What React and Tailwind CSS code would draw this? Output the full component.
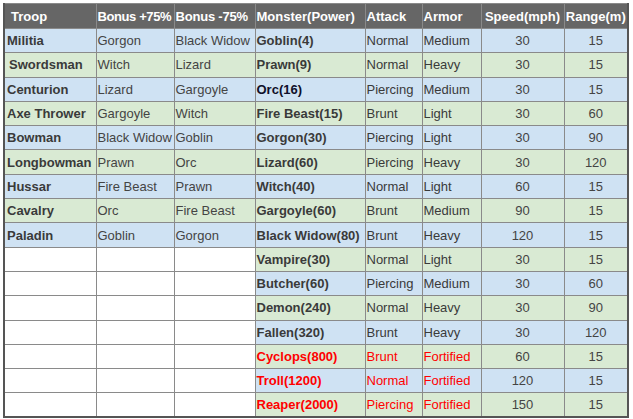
import React from 'react';

const troops = [
  ['Militia', 'Gorgon', 'Black Widow'],
  ['Swordsman', 'Witch', 'Lizard'],
  ['Centurion', 'Lizard', 'Gargoyle'],
  ['Axe Thrower', 'Gargoyle', 'Witch'],
  ['Bowman', 'Black Widow', 'Goblin'],
  ['Longbowman', 'Prawn', 'Orc'],
  ['Hussar', 'Fire Beast', 'Prawn'],
  ['Cavalry', 'Orc', 'Fire Beast'],
  ['Paladin', 'Goblin', 'Gorgon'],
];

const monsters = [
  ['Goblin(4)', 'Normal', 'Medium', '30', '15'],
  ['Prawn(9)', 'Normal', 'Heavy', '30', '15'],
  ['Orc(16)', 'Piercing', 'Medium', '30', '15'],
  ['Fire Beast(15)', 'Brunt', 'Light', '30', '60'],
  ['Gorgon(30)', 'Piercing', 'Light', '30', '90'],
  ['Lizard(60)', 'Piercing', 'Heavy', '30', '120'],
  ['Witch(40)', 'Normal', 'Light', '60', '15'],
  ['Gargoyle(60)', 'Brunt', 'Medium', '90', '15'],
  ['Black Widow(80)', 'Brunt', 'Heavy', '120', '15'],
  ['Vampire(30)', 'Normal', 'Light', '30', '15'],
  ['Butcher(60)', 'Piercing', 'Medium', '30', '60'],
  ['Demon(240)', 'Normal', 'Heavy', '30', '90'],
  ['Fallen(320)', 'Brunt', 'Heavy', '30', '120'],
  ['Cyclops(800)', 'Brunt', 'Fortified', '60', '15'],
  ['Troll(1200)', 'Normal', 'Fortified', '120', '15'],
  ['Reaper(2000)', 'Piercing', 'Fortified', '150', '15'],
];

const cell = 'border border-[#8a8a8a] px-[1px] py-0 whitespace-nowrap align-middle';

export default function App() {
  return (
    <div className="w-[633px] h-[419px] bg-white pt-[3px] pl-[3px] overflow-hidden" style={{ fontFamily: '"Liberation Sans", Arial, sans-serif' }}>
      <table className="border-collapse table-fixed w-[624px] text-[13px] leading-[15px] border-2 border-t-0 border-[#555]">
        <colgroup>
          <col className="w-[92px]" />
          <col className="w-[78px]" />
          <col className="w-[81px]" />
          <col className="w-[110px]" />
          <col className="w-[57px]" />
          <col className="w-[59px]" />
          <col className="w-[83px]" />
          <col className="w-[64px]" />
        </colgroup>
        <thead>
          <tr className="h-[25px] bg-[#666666] text-white font-bold">
            <th className={`${cell} text-left pl-[6px]`}>Troop</th>
            <th className={`${cell} text-left tracking-[-0.4px]`}>Bonus +75%</th>
            <th className={`${cell} text-left tracking-[-0.2px]`}>Bonus -75%</th>
            <th className={`${cell} text-left`}>Monster(Power)</th>
            <th className={`${cell} text-left`}>Attack</th>
            <th className={`${cell} text-left`}>Armor</th>
            <th className={`${cell} text-center`}>Speed(mph)</th>
            <th className={`${cell} text-center`}>Range(m)</th>
          </tr>
        </thead>
        <tbody>
          {monsters.map((m, i) => {
            const bg = i % 2 === 0 ? 'bg-[#cfe2f3]' : 'bg-[#d9ead3]';
            const t = troops[i];
            const red = i >= 13;
            const txt = red ? 'text-[#ff0000]' : 'text-[#3a3a3a]';
            const monTxt = red ? 'text-[#ff0000]' : i === 2 ? 'text-[#10102a]' : 'text-[#3a3a3a]';
            return (
              <tr key={i} className="h-[24.3px]">
                {t ? (
                  <>
                    <td className={`${cell} ${bg} font-bold text-[#3a3a3a] ${i === 1 ? 'pl-[4px]' : 'pl-[2px]'}`}>{t[0]}</td>
                    <td className={`${cell} ${bg} text-[#444]`}>{t[1]}</td>
                    <td className={`${cell} ${bg} text-[#444]`}>{t[2]}</td>
                  </>
                ) : (
                  <>
                    <td className={`${cell} bg-white`}></td>
                    <td className={`${cell} bg-white`}></td>
                    <td className={`${cell} bg-white`}></td>
                  </>
                )}
                <td className={`${cell} ${bg} font-bold ${monTxt}`}>{m[0]}</td>
                <td className={`${cell} ${bg} ${txt}`}>{m[1]}</td>
                <td className={`${cell} ${bg} ${txt}`}>{m[2]}</td>
                <td className={`${cell} ${bg} text-center text-[#444]`}>{m[3]}</td>
                <td className={`${cell} ${bg} text-center text-[#444]`}>{m[4]}</td>
              </tr>
            );
          })}
        </tbody>
      </table>
    </div>
  );
}
